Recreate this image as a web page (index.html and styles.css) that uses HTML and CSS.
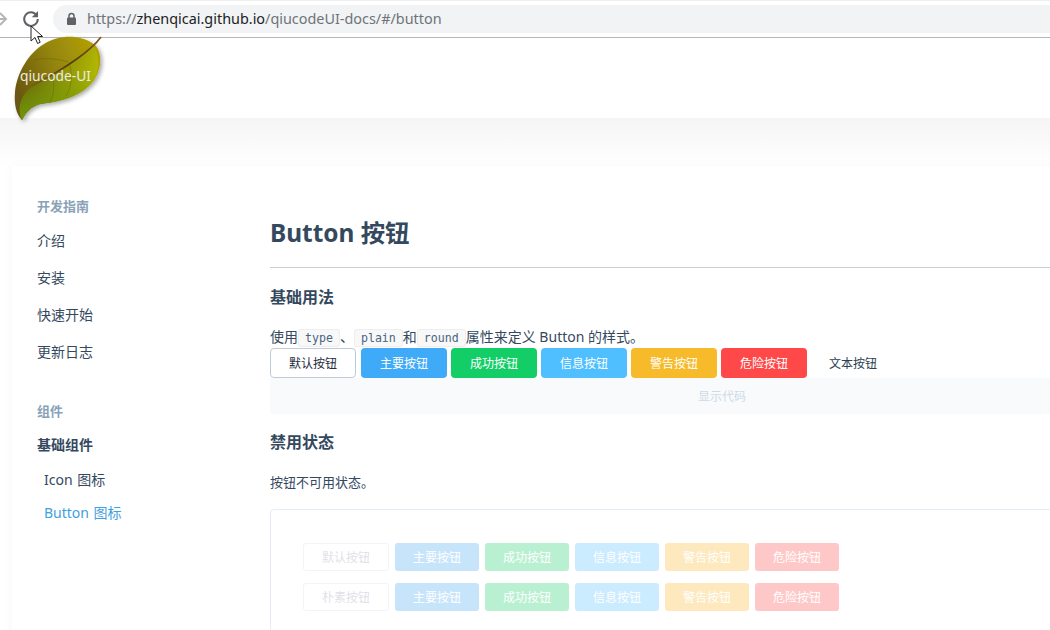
FILE: index.html
```html
<!DOCTYPE html>
<html lang="zh">
<head>
    <meta charset="UTF-8">
    <title>qiucode-UI</title>
    <link rel="stylesheet" href="styles.css">
</head>
<body>
    <!-- browser toolbar -->
    <div class="toolbar">
        <svg class="tool-back" width="8" height="14" viewBox="0 0 8 14"><path d="M0 1l6 6-6 6M-6 7h12" fill="none" stroke="#b4b6b9" stroke-width="2"/></svg>
        <svg class="tool-reload" width="18" height="18" viewBox="0 0 18 18"><path d="M14.6 5.2A6.8 6.8 0 1 0 15.8 9" fill="none" stroke="#5f6368" stroke-width="2"/><path d="M16 1v6.2h-6.2z" fill="#5f6368"/></svg>
        <div class="address">
            <svg width="11" height="14" viewBox="0 0 11 14"><path d="M3 6V4a2.5 2.5 0 0 1 5 0v2" fill="none" stroke="#5f6368" stroke-width="1.5"/><rect x="1" y="5.5" width="9" height="7.5" rx="1" fill="#5f6368"/></svg>
            <span class="url"><span class="url-scheme">https://</span><span class="url-host">zhenqicai.github.io</span>/qiucodeUI-docs/#/button</span>
        </div>
    </div>

    <svg class="cursor" width="14" height="21" viewBox="0 0 14 21"><path d="M1 1v15l4-3.5 2.6 6 2.6-1.2-2.6-5.8h5z" fill="#fff" stroke="#222" stroke-width="1"/></svg>

    <div class="header">
        <svg class="logo" width="110" height="100" viewBox="0 0 110 100">
            <defs>
                <linearGradient id="leaf" x1="0" y1="0.6" x2="1" y2="0.2">
                    <stop offset="0" stop-color="#6a5612"/>
                    <stop offset="0.5" stop-color="#94850a"/>
                    <stop offset="1" stop-color="#b3a204"/>
                </linearGradient>
                <linearGradient id="leaf-low" x1="0" y1="0.3" x2="1" y2="0.5">
                    <stop offset="0" stop-color="#5f5012"/>
                    <stop offset="0.5" stop-color="#8c8f08"/>
                    <stop offset="1" stop-color="#b6bc02"/>
                </linearGradient>
                <linearGradient id="leaf-tip" x1="0" y1="0" x2="0" y2="1">
                    <stop offset="0.35" stop-color="#6f9a05" stop-opacity="0"/>
                    <stop offset="1" stop-color="#6f9a05"/>
                </linearGradient>
                <linearGradient id="rib" x1="1" y1="0" x2="0" y2="1">
                    <stop offset="0" stop-color="#8a5a20"/>
                    <stop offset="0.5" stop-color="#4f3a10"/>
                    <stop offset="1" stop-color="#4f3a10" stop-opacity="0.2"/>
                </linearGradient>
                <filter id="soft" x="-20%" y="-20%" width="140%" height="140%">
                    <feDropShadow dx="2" dy="2" stdDeviation="2" flood-color="#000" flood-opacity="0.35"/>
                </filter>
            </defs>
            <g transform="translate(-8 -35)">
                <path d="M92 43C80 35 60 34 44 44C29 53 17 72 15 92C14 104 16 114 22 120C26 112 30 107 40 104C58 102 82 97 94 80C102 68 102 54 96 46Z" fill="url(#leaf)" filter="url(#soft)"/>
                <path d="M93 46C78 62 55 76 35 85C22 92 16 106 22 120C26 112 30 107 40 104C58 102 82 97 94 80C100 68 100 54 93 46Z" fill="url(#leaf-low)"/>
                <path d="M93 46C78 62 55 76 35 85C22 92 16 106 22 120C26 112 30 107 40 104C58 102 82 97 94 80C100 68 100 54 93 46Z" fill="url(#leaf-tip)"/>
                <path d="M101 37C90 52 62 70 32 86" fill="none" stroke="url(#rib)" stroke-width="1.8"/>
                <path d="M70 66C72 76 72 86 66 96M52 76C55 84 54 94 50 102M34 60C44 58 56 58 68 62" fill="none" stroke="#5c6208" stroke-width="0.7" opacity="0.6"/>
                <text x="20" y="81" class="logo-text">qiucode-UI</text>
            </g>
        </svg>
    </div>

    <div class="main">
        <div class="card">
            <div class="sidebar">
                <div class="nav-title">开发指南</div>
                <a class="nav-item">介绍</a>
                <a class="nav-item">安装</a>
                <a class="nav-item">快速开始</a>
                <a class="nav-item">更新日志</a>

                <div class="nav-title nav-title-second">组件</div>
                <div class="nav-group">基础组件</div>
                <a class="nav-sub">Icon 图标</a>
                <a class="nav-sub nav-active">Button 图标</a>
            </div>

            <div class="content">
                <h1>Button 按钮</h1>
                <h2 class="first-title">基础用法</h2>
                <p class="intro">使用<code>type</code>、<code>plain</code>和<code>round</code>属性来定义 Button 的样式。</p>
                <div class="btn-row">
                    <button class="btn btn-default">默认按钮</button>
                    <button class="btn btn-primary">主要按钮</button>
                    <button class="btn btn-success">成功按钮</button>
                    <button class="btn btn-info">信息按钮</button>
                    <button class="btn btn-warning">警告按钮</button>
                    <button class="btn btn-danger">危险按钮</button>
                    <button class="btn btn-text">文本按钮</button>
                </div>
                <div class="show-code">显示代码</div>

                <h2 class="second-title">禁用状态</h2>
                <p class="intro-second">按钮不可用状态。</p>
                <div class="demo-box">
                    <div class="dis-row">
                        <button class="dis dis-default">默认按钮</button>
                        <button class="dis dis-primary">主要按钮</button>
                        <button class="dis dis-success">成功按钮</button>
                        <button class="dis dis-info">信息按钮</button>
                        <button class="dis dis-warning">警告按钮</button>
                        <button class="dis dis-danger">危险按钮</button>
                    </div>
                    <div class="dis-row">
                        <button class="dis dis-default">朴素按钮</button>
                        <button class="dis dis-primary">主要按钮</button>
                        <button class="dis dis-success">成功按钮</button>
                        <button class="dis dis-info">信息按钮</button>
                        <button class="dis dis-warning">警告按钮</button>
                        <button class="dis dis-danger">危险按钮</button>
                    </div>
                </div>
            </div>
        </div>
    </div>
</body>
</html>
```

FILE: styles.css
```css
html, body {
    margin: 0;
    height: 630px;
    overflow: hidden;
}
body {
    position: relative;
    background-color: #fff;
    color: #34495e;
    font-family: "Noto Sans", "Noto Sans CJK SC", sans-serif;
    font-size: 14px;
}

/* toolbar */
.toolbar {
    display: flex;
    align-items: center;
    height: 37px;
    border-bottom: 1px solid #b5b5b5;
    box-shadow: inset 0 1px #efefef;
    position: relative;
}
.tool-back {
    position: absolute;
    left: 0;
    top: 12px;
}
.tool-reload {
    position: absolute;
    left: 22px;
    top: 10px;
}
.address {
    display: flex;
    align-items: center;
    gap: 10px;
    margin-left: 53px;
    flex: 1;
    height: 28px;
    padding-left: 13px;
    background-color: #f1f3f4;
    border-radius: 14px 0 0 14px;
}
.url {
    font-family: "Noto Sans", sans-serif;
    font-size: 14.4px;
    color: #6f7378;
}
.url-host {
    color: #202124;
}
.cursor {
    position: absolute;
    left: 30px;
    top: 25px;
    z-index: 3;
}

/* header */
.header {
    height: 80px;
    position: relative;
}
.logo {
    position: absolute;
    left: 8px;
    top: -3px;
    z-index: 2;
}
.logo-text {
    font-family: "Noto Sans", sans-serif;
    font-size: 13.8px;
    fill: #ecece2;
}

.main {
    padding: 48px 0 0 12px;
    background: linear-gradient(#f5f5f5, #fff 48px);
}
.card {
    display: flex;
    width: 1200px;
    height: 600px;
    background-color: #fff;
    box-shadow: 0 0 12px rgba(0, 0, 0, 0.03);
}

/* sidebar */
.sidebar {
    width: 258px;
    flex: none;
    padding: 28px 0 0 25px;
    box-sizing: border-box;
}
.nav-title {
    color: #8aa2b8;
    font-size: 13px;
    font-weight: bold;
    line-height: 24px;
    margin-bottom: 4px;
}
.nav-title-second {
    margin-top: 29px;
    margin-bottom: 5px;
}
.nav-item {
    display: block;
    line-height: 37px;
}
.nav-group {
    height: 35px;
    font-weight: bold;
    line-height: 34px;
}
.nav-sub {
    display: block;
    padding-left: 7px;
    line-height: 33px;
    word-spacing: 1px;
}
.nav-active {
    color: #3f9fe0;
}

/* content */
.content {
    width: 904px;
    flex: none;
    padding-top: 47px;
}
h1 {
    margin: 0;
    font-size: 24.4px;
    line-height: 40px;
    padding-bottom: 14px;
    border-bottom: 1px solid #c9ced4;
}
h2 {
    margin: 0;
    font-size: 16px;
    height: 24px;
    line-height: 25px;
}
.first-title {
    margin-top: 17px;
}
.second-title {
    margin-top: 16px;
}
.intro {
    margin: 16px 0 0;
    height: 23px;
    line-height: 23px;
}
.intro-second {
    margin: 17px 0 0;
    line-height: 22px;
    font-size: 13px;
}
code {
    font-family: "DejaVu Sans Mono", monospace;
    font-size: 11.6px;
    padding: 1px 6px;
    color: #476582;
    background-color: #f8f8f8;
    border: 1px solid #eee;
    border-radius: 3px;
}

/* buttons */
.btn-row {
    display: flex;
    gap: 4px;
}
.btn {
    height: 30px;
    width: 86px;
    padding: 0 0 1px;
    font-family: inherit;
    font-size: 12px;
    color: #fff;
    border: none;
    border-radius: 4px;
}
.btn-default {
    background-color: #fff;
    color: #1f2d3d;
    border: 1px solid #bfcbd9;
    margin-right: 1px;
}
.btn-primary { background-color: #3faaf8; }
.btn-success { background-color: #13ce66; }
.btn-info { background-color: #50bfff; }
.btn-warning { background-color: #f7ba2a; }
.btn-danger { background-color: #ff4949; }
.btn-text {
    width: 84px;
    background: none;
    color: #2c3e50;
}
.show-code {
    height: 36px;
    line-height: 37px;
    text-align: center;
    font-size: 12px;
    color: #cfdae6;
    background-color: #f9fafc;
}
.demo-box {
    margin-top: 16px;
    padding: 33px 32px;
    height: 200px;
    border: 1px solid #e3edf3;
    border-radius: 4px;
}
.dis-row {
    display: flex;
    gap: 6px;
    margin-bottom: 12px;
}
.dis {
    width: 84px;
    height: 28px;
    padding: 0 0 1px;
    font-family: inherit;
    font-size: 12px;
    color: #fff;
    border: none;
    border-radius: 3px;
}
.dis-default {
    width: 86px;
    color: #dfe2e7;
    background-color: #fff;
    border: 1px solid #f2f4f7;
}
.dis-primary { background-color: #c6e5fb; }
.dis-success { background-color: #b9f0d1; }
.dis-info { background-color: #cbebff; }
.dis-warning { background-color: #fde9bd; }
.dis-danger { background-color: #ffc8c8; }
```
